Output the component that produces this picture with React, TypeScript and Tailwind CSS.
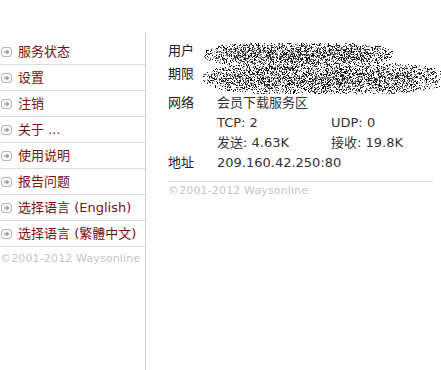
import React from "react";

const font = { fontFamily: '"DejaVu Sans", "Noto Sans CJK SC", sans-serif' };

function ArrowIcon() {
  return (
    <svg width="11" height="10" viewBox="0 0 11 10" className="shrink-0">
      <rect x="0.5" y="0.5" width="10" height="9" rx="2.5" fill="#f6f6f6" stroke="#b8b8b8" />
      <path d="M3 5 H7.5" stroke="#777" strokeWidth="1" />
      <path d="M5.5 3 L7.5 5 L5.5 7" stroke="#777" strokeWidth="1" fill="none" />
    </svg>
  );
}

function Noise() {
  let s = 12345;
  const rnd = () => {
    s = (s * 1103515245 + 12345) & 0x7fffffff;
    return s / 0x7fffffff;
  };
  const rects: React.ReactElement[] = [];
  const W = 241;
  const H = 52;
  for (let y = 0; y < H; y++) {
    for (let x = 0; x < W; x++) {
      let d = 0;
      const b1x = (x - 98) / 96;
      const b1y = (y - 12) / 12;
      const e1 = b1x * b1x * b1x * b1x + b1y * b1y;
      if (e1 < 1) d = Math.max(d, 0.6 * (1 - e1 * 0.6));
      const b2x = (x - 125) / 124;
      const b2y = (y - 36) / 16;
      const e2 = b2x * b2x * b2x * b2x + b2y * b2y;
      if (e2 < 1) d = Math.max(d, 0.55 * (1 - e2 * 0.6));
      if (d > 0 && rnd() < d) {
        const g = rnd();
        const c = g < 0.5 ? "#111" : g < 0.78 ? "#555" : "#999";
        rects.push(<rect key={x + "_" + y} x={x} y={y} width="1" height="1" fill={c} />);
      }
    }
  }
  return (
    <svg width={W} height={H} viewBox={`0 0 ${W} ${H}`} className="absolute left-[54px] top-[9px]" shapeRendering="crispEdges">
      {rects}
    </svg>
  );
}

const menu = [
  "服务状态",
  "设置",
  "注销",
  "关于 ...",
  "使用说明",
  "报告问题",
  "选择语言 (English)",
  "选择语言 (繁體中文)",
];

export default function App() {
  return (
    <div className="w-[441px] h-[370px] bg-white overflow-hidden flex pt-[33px]" style={font}>
      <div className="w-[145px] shrink-0 pt-[6px]">
        {menu.map((m) => (
          <div key={m} className="h-[26px] border-b border-[#dcdcdc] flex items-center pl-[1px] gap-[6px]">
            <ArrowIcon />
            <span className="text-[13px] text-[#7a1212] whitespace-nowrap leading-none">{m}</span>
          </div>
        ))}
        <div className="text-[11px] text-[#c4c4c4] whitespace-nowrap pt-[6px] leading-none tracking-[0.15px]">©2001-2012 Waysonline</div>
      </div>
      <div className="w-px bg-[#d0d0d0] shrink-0" />
      <div className="flex-1 relative pl-[22px] pr-[8px] pt-[7px] text-[13px] text-[#222]">
        <Noise />
        <div className="flex flex-col leading-none">
          <div className="h-[20px] flex items-center">用户</div>
          <div className="h-[20px] mt-[3px] flex items-center">期限</div>
          <div className="h-[20px] mt-[9px] flex items-center">
            <span className="w-[49px]">网络</span>
            <span className="text-[#333]">会员下载服务区</span>
          </div>
          <div className="h-[20px] flex items-center text-[#333]">
            <span className="w-[49px]" />
            <span className="w-[114px]">TCP: 2</span>
            <span>UDP: 0</span>
          </div>
          <div className="h-[19px] mt-[1px] flex items-center text-[#333]">
            <span className="w-[49px]" />
            <span className="w-[114px]">发送: 4.63K</span>
            <span>接收: 19.8K</span>
          </div>
          <div className="h-[20px] flex items-center">
            <span className="w-[49px]">地址</span>
            <span className="text-[#333]">209.160.42.250:80</span>
          </div>
        </div>
        <div className="mt-[9px] border-t border-[#e2e2e2]" />
        <div className="text-[11px] text-[#c4c4c4] whitespace-nowrap pt-[3px] leading-none tracking-[0.15px]">©2001-2012 Waysonline</div>
      </div>
    </div>
  );
}
